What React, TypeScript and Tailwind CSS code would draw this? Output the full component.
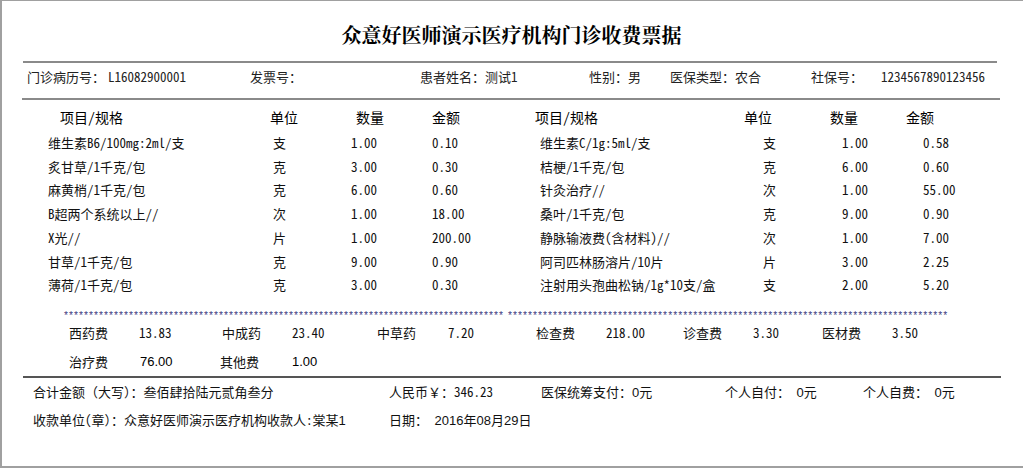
import React from "react";

const left: string[][] = [
  ["维生素B6/100mg:2ml/支", "支", "1.00", "0.10"],
  ["炙甘草/1千克/包", "克", "3.00", "0.30"],
  ["麻黄梢/1千克/包", "克", "6.00", "0.60"],
  ["B超两个系统以上//", "次", "1.00", "18.00"],
  ["X光//", "片", "1.00", "200.00"],
  ["甘草/1千克/包", "克", "9.00", "0.90"],
  ["薄荷/1千克/包", "克", "3.00", "0.30"],
];

const right: string[][] = [
  ["维生素C/1g:5ml/支", "支", "1.00", "0.58"],
  ["桔梗/1千克/包", "克", "6.00", "0.60"],
  ["针灸治疗//", "次", "1.00", "55.00"],
  ["桑叶/1千克/包", "克", "9.00", "0.90"],
  ["静脉输液费(含材料)//", "次", "1.00", "7.00"],
  ["阿司匹林肠溶片/10片", "片", "3.00", "2.25"],
  ["注射用头孢曲松钠/1g*10支/盒", "支", "2.00", "5.20"],
];

// 5px pitch stars, separated like the printed template
const stars = "*".repeat(88);

export default function App() {
  const sans = "font-['Liberation_Sans',sans-serif]";
  return (
    <div className="w-[1023px] h-[468px] bg-white border-l-2 border-t border-b-2 border-[#a0a0a0] flex flex-col text-[13px] text-[#111] font-['Noto_Sans_Mono_CJK_SC','Noto_Sans_CJK_SC',sans-serif] overflow-hidden">
      {/* title */}
      <div className="h-[60px] pt-[8px] flex items-center justify-center">
        <div className="text-[20px] leading-[20px] font-bold text-black font-['Noto_Serif_CJK_SC','Noto_Sans_CJK_SC',serif] -ml-[2px]">
          众意好医师演示医疗机构门诊收费票据
        </div>
      </div>
      <div className="ml-[21px] w-[974px] h-[2px] bg-[#8a8a8a] shrink-0" />

      {/* patient info */}
      <div className="h-[35px] pb-[7px] pl-[25px] flex items-center text-[#222] whitespace-nowrap">
        <div className="w-[223px] flex"><span>门诊病历号：</span><span className="ml-[3px]">L16082900001</span></div>
        <div className="w-[170px]">发票号：</div>
        <div className="w-[169px]">患者姓名：测试1</div>
        <div className="w-[81px]">性别：男</div>
        <div className="w-[141px]">医保类型：农合</div>
        <div className="flex"><span>社保号：</span><span className="ml-[18px]">1234567890123456</span></div>
      </div>
      <div className="ml-[20px] w-[978px] h-[2px] bg-[#8a8a8a] shrink-0" />

      {/* header */}
      <div className="h-[31px] pt-[3px] pl-[58px] flex items-center text-[14px] text-black whitespace-nowrap">
        <div className="w-[210px]">项目/规格</div>
        <div className="w-[86px]">单位</div>
        <div className="w-[76px]">数量</div>
        <div className="w-[103px]">金额</div>
        <div className="w-[209px]">项目/规格</div>
        <div className="w-[86px]">单位</div>
        <div className="w-[76px]">数量</div>
        <div>金额</div>
      </div>

      {/* items */}
      <div className="flex flex-col">
        {left.map((l, i) => {
          const r = right[i];
          return (
            <div key={i} className="h-[23.7px] pl-[46px] flex items-center whitespace-nowrap">
              <div className="w-[225px]">{l[0]}</div>
              <div className="w-[78px]">{l[1]}</div>
              <div className="w-[81px]">{l[2]}</div>
              <div className="w-[108px]">{l[3]}</div>
              <div className="w-[223px]">{r[0]}</div>
              <div className="w-[79px]">{r[1]}</div>
              <div className="w-[81px]">{r[2]}</div>
              <div>{r[3]}</div>
            </div>
          );
        })}
      </div>

      {/* stars */}
      <div className="mt-[13px] h-[14px] pl-[61px] flex items-center gap-[4px] text-[10px] leading-[14px] tracking-[-1px] text-[#3d3a80] font-['Liberation_Mono',monospace] whitespace-nowrap">
        <div>{stars}</div>
        <div>{stars}</div>
      </div>

      {/* summary */}
      <div className="h-[18px] pl-[67px] flex items-center whitespace-nowrap">
        <div className="w-[70px]">西药费</div>
        <div className="w-[83px]">13.83</div>
        <div className="w-[70px]">中成药</div>
        <div className="w-[85px]">23.40</div>
        <div className="w-[71px]">中草药</div>
        <div className="w-[88px]">7.20</div>
        <div className="w-[70px]">检查费</div>
        <div className="w-[77px]">218.00</div>
        <div className="w-[70px]">诊查费</div>
        <div className="w-[69px]">3.30</div>
        <div className="w-[70px]">医材费</div>
        <div>3.50</div>
      </div>
      <div className="h-[34px] pt-[6px] pl-[67px] flex items-center whitespace-nowrap">
        <div className="w-[71px]">治疗费</div>
        <div className={`w-[80px] text-black ${sans}`}>76.00</div>
        <div className="w-[72px]">其他费</div>
        <div className={`text-black ${sans}`}>1.00</div>
      </div>
      <div className="ml-[21px] w-[978px] h-[2px] bg-[#555] shrink-0" />

      {/* footer */}
      <div className="h-[28px] pl-[31px] flex items-center whitespace-nowrap">
        <div className="w-[356px]">合计金额（大写）：叁佰肆拾陆元贰角叁分</div>
        <div className="w-[152px]">人民币￥：346.23</div>
        <div className="w-[184px]">医保统筹支付：<span className={sans}>0</span>元</div>
        <div className="w-[138px]">个人自付： <span className={sans}>0</span>元</div>
        <div>个人自费： <span className={sans}>0</span>元</div>
      </div>
      <div className="h-[28px] pl-[31px] flex items-center whitespace-nowrap">
        <div className="w-[356px]">收款单位(章）：众意好医师演示医疗机构收款人:棠某<span className={sans}>1</span></div>
        <div>日期： <span className={sans}>2016</span>年<span className={sans}>08</span>月<span className={sans}>29</span>日</div>
      </div>
      <div className="flex-1" />
    </div>
  );
}
